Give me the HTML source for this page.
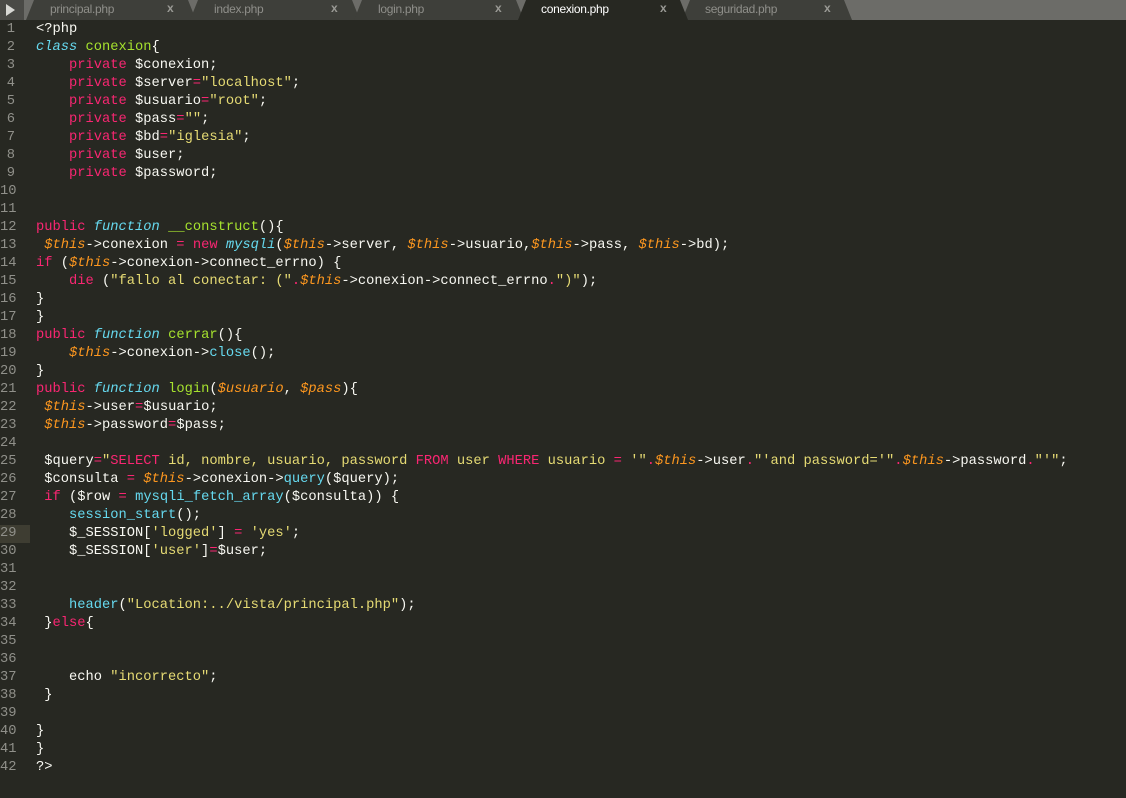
<!DOCTYPE html>
<html><head><meta charset="utf-8"><style>
*{margin:0;padding:0;box-sizing:border-box}
body{width:1126px;height:798px;background:#272822;overflow:hidden;position:relative;font-family:"Liberation Sans",sans-serif}
#bar{position:absolute;left:0;top:0;width:1126px;height:20px;background:#6c6c68}
.tab{position:absolute;top:0;height:20px;background:#3e3f3a;clip-path:polygon(0 100%,8px 0,calc(100% - 8px) 0,100% 100%)}
.tab.a{background:#272822}
.tl{position:absolute;top:2px;font-size:12px;color:#8f8f8a;letter-spacing:-0.3px}
.tl.a{color:#fff}
.x{position:absolute;top:1px;font-size:12px;color:#9a9a95;font-weight:bold}
.code{position:absolute;top:21px;font-family:"Liberation Mono",monospace;font-size:13.75px;line-height:18px;color:#f8f8f2;white-space:pre}
.ln{left:0;width:15px;text-align:right;color:#90908a}
.k{color:#f92672}.s{color:#e6db74}.b{color:#66d9ef;font-style:italic}.bn{color:#66d9ef}.g{color:#a6e22e}.o{color:#fd971f;font-style:italic}
</style></head><body>
<div id="bar">
<div style="position:absolute;left:0;top:0;width:24px;height:20px;background:#4a4a46"></div>
<div style="position:absolute;left:6px;top:4px;width:0;height:0;border-left:9px solid #d8d8d4;border-top:6px solid transparent;border-bottom:6px solid transparent"></div>
<div class="tab" style="left:26px;width:170px"></div>
<div class="tab" style="left:190px;width:170px"></div>
<div class="tab" style="left:354px;width:170px"></div>
<div class="tab" style="left:682px;width:170px"></div>
<div class="tab a" style="left:518px;width:170px"></div>
<span class="tl" style="left:50px">principal.php</span><span class="x" style="left:167px">x</span>
<span class="tl" style="left:214px">index.php</span><span class="x" style="left:331px">x</span>
<span class="tl" style="left:378px">login.php</span><span class="x" style="left:495px">x</span>
<span class="tl a" style="left:541px">conexion.php</span><span class="x" style="left:660px">x</span>
<span class="tl" style="left:705px">seguridad.php</span><span class="x" style="left:824px">x</span>
</div>
<div style="position:absolute;left:0;top:525px;width:30px;height:18px;background:#3e3d32"></div>
<div class="code" style="left:36px">&lt;?php
<span class="b">class</span> <span class="g">conexion</span>{
    <span class="k">private</span> $conexion;
    <span class="k">private</span> $server<span class="k">=</span><span class="s">"localhost"</span>;
    <span class="k">private</span> $usuario<span class="k">=</span><span class="s">"root"</span>;
    <span class="k">private</span> $pass<span class="k">=</span><span class="s">""</span>;
    <span class="k">private</span> $bd<span class="k">=</span><span class="s">"iglesia"</span>;
    <span class="k">private</span> $user;
    <span class="k">private</span> $password;


<span class="k">public</span> <span class="b">function</span> <span class="g">__construct</span>(){
 <span class="o">$this</span>-&gt;conexion <span class="k">=</span> <span class="k">new</span> <span class="b">mysqli</span>(<span class="o">$this</span>-&gt;server, <span class="o">$this</span>-&gt;usuario,<span class="o">$this</span>-&gt;pass, <span class="o">$this</span>-&gt;bd);
<span class="k">if</span> (<span class="o">$this</span>-&gt;conexion-&gt;connect_errno) {
    <span class="k">die</span> (<span class="s">"fallo al conectar: ("</span><span class="k">.</span><span class="o">$this</span>-&gt;conexion-&gt;connect_errno<span class="k">.</span><span class="s">")"</span>);
}
}
<span class="k">public</span> <span class="b">function</span> <span class="g">cerrar</span>(){
    <span class="o">$this</span>-&gt;conexion-&gt;<span class="bn">close</span>();
}
<span class="k">public</span> <span class="b">function</span> <span class="g">login</span>(<span class="o">$usuario</span>, <span class="o">$pass</span>){
 <span class="o">$this</span>-&gt;user<span class="k">=</span>$usuario;
 <span class="o">$this</span>-&gt;password<span class="k">=</span>$pass;

 $query<span class="k">=</span><span class="s">"</span><span class="k">SELECT</span><span class="s"> id, nombre, usuario, password </span><span class="k">FROM</span><span class="s"> user </span><span class="k">WHERE</span><span class="s"> usuario </span><span class="k">=</span><span class="s"> '"</span><span class="k">.</span><span class="o">$this</span>-&gt;user<span class="k">.</span><span class="s">"'and password='"</span><span class="k">.</span><span class="o">$this</span>-&gt;password<span class="k">.</span><span class="s">"'"</span>;
 $consulta <span class="k">=</span> <span class="o">$this</span>-&gt;conexion-&gt;<span class="bn">query</span>($query);
 <span class="k">if</span> ($row <span class="k">=</span> <span class="bn">mysqli_fetch_array</span>($consulta)) {
    <span class="bn">session_start</span>();
    $_SESSION[<span class="s">'logged'</span>] <span class="k">=</span> <span class="s">'yes'</span>;
    $_SESSION[<span class="s">'user'</span>]<span class="k">=</span>$user;


    <span class="bn">header</span>(<span class="s">"Location:../vista/principal.php"</span>);
 }<span class="k">else</span>{


    echo <span class="s">"incorrecto"</span>;
 }

}
}
?&gt;</div>
<div class="code ln">1
2
3
4
5
6
7
8
9
10
11
12
13
14
15
16
17
18
19
20
21
22
23
24
25
26
27
28
29
30
31
32
33
34
35
36
37
38
39
40
41
42</div>
</body></html>
